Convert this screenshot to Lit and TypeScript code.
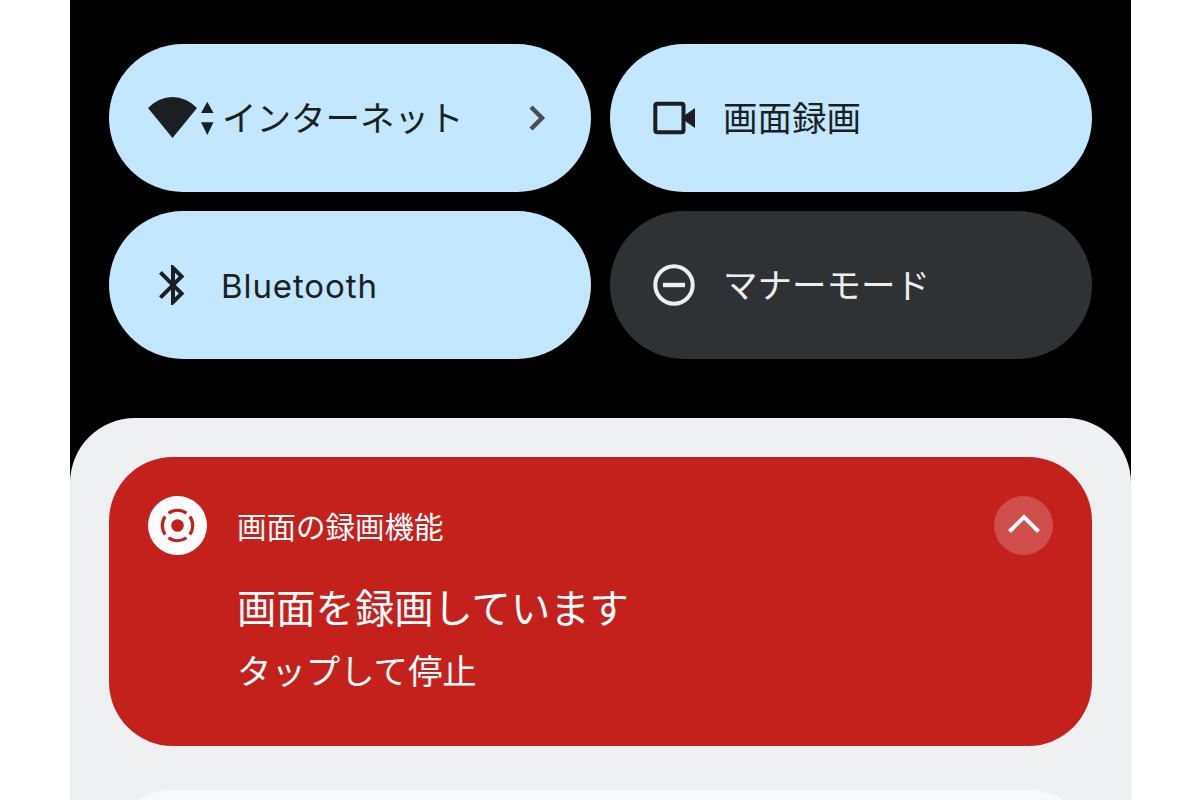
import { LitElement, html, css } from "lit";
import { customElement } from "lit/decorators.js";

@customElement("app-root")
export class AppRoot extends LitElement {
  static styles = css`
    :host { display: block; width: 1200px; height: 800px; background: #fff; overflow: hidden; }
    .phone {
      width: 1061px; height: 800px; margin-left: 70px; background: #000; overflow: hidden;
      font-family: "Noto Sans CJK JP", "Noto Sans", sans-serif;
    }
    .tiles {
      display: grid; grid-template-columns: 482px 482px; grid-auto-rows: 147.5px;
      column-gap: 19px; row-gap: 19.7px; padding: 44px 39px 0;
    }
    .tile {
      display: flex; align-items: center; border-radius: 74px; background: #c2e7ff;
      color: #1b1f22; font-size: 34.5px; padding-left: 40px;
    }
    .tile.off { background: #2f3235; color: #eceef0; }
    .tile svg { flex: none; display: block; }
    .tile .label { margin-left: 25px; line-height: 48px; white-space: nowrap; transform: translateY(-2px); }
    .tile.net { padding-left: 39px; }
    .tile.net .label { margin-left: 6px; }
    .tile.net .chev { margin-left: auto; margin-right: 45px; }
    .tile .latin { font-family: "Inter", sans-serif; font-size: 33px; letter-spacing: 0.9px; margin-left: 24px; transform: translateY(1px); }
    .panel {
      margin-top: 59px; height: 400px; background: #eff0f2; border-radius: 65px 65px 0 0;
      padding: 39px 39px 0; box-sizing: border-box;
    }
    .card {
      height: 289px; background: #c4211d; border-radius: 64px; color: #fff;
      padding: 39px 39px 0; box-sizing: border-box;
    }
    .head { display: flex; align-items: center; gap: 30px; height: 59px; }
    .head svg { flex: none; display: block; }
    .app { font-size: 29.5px; line-height: 59px; white-space: nowrap; }
    .expand { margin-left: auto; }
    .body { margin: 21px 0 0 89px; }
    .title { font-size: 39.3px; line-height: 60px; white-space: nowrap; }
    .sub { font-size: 34.4px; line-height: 60px; margin-top: 3px; white-space: nowrap; }
    .next { margin-top: 44px; height: 200px; background: #f8f9fb; border-radius: 64px; }
  `;

  render() {
    return html`
      <div class="phone">
        <div class="tiles">
          <div class="tile net">
            <svg width="68" height="48" viewBox="0 0 68 48">
              <path d="M0 14 A33 33 0 0 1 49 14 L24.5 44 Z" fill="#1b1f22"/>
              <path d="M59.3 7.7 L65.5 19 L53 19 Z M53 28.3 L65.5 28.3 L59.3 41 Z" fill="#1b1f22"/>
            </svg>
            <span class="label">インターネット</span>
            <svg class="chev" width="18" height="28" viewBox="0 0 18 28">
              <path d="M3 3 L14 14 L3 25" fill="none" stroke="#494d50" stroke-width="4.4"/>
            </svg>
          </div>
          <div class="tile">
            <svg width="48" height="48" viewBox="0 0 48 48">
              <rect x="5.3" y="9.7" width="28.2" height="28.6" rx="2" fill="none" stroke="#1b1f22" stroke-width="4"/>
              <path d="M35 21 L45 14 L45 34 L35 27 Z" fill="#1b1f22"/>
            </svg>
            <span class="label">画面録画</span>
          </div>
          <div class="tile">
            <svg width="48" height="48" viewBox="0 0 24 24">
              <path fill="#1b1f22" d="M17.71 7.71L12 2h-1v7.59L6.41 5 5 6.41 10.59 12 5 17.59 6.41 19 11 14.41V22h1l5.71-5.71-4.3-4.29 4.3-4.29zM13 5.83l1.88 1.88L13 9.59V5.83zm1.88 10.46L13 18.17v-3.76l1.88 1.88z"/>
            </svg>
            <span class="label latin">Bluetooth</span>
          </div>
          <div class="tile off">
            <svg width="48" height="48" viewBox="0 0 48 48">
              <circle cx="24" cy="24" r="18.7" fill="none" stroke="#eceef0" stroke-width="4"/>
              <rect x="13" y="21.8" width="22" height="4.4" fill="#eceef0"/>
            </svg>
            <span class="label">マナーモード</span>
          </div>
        </div>
        <div class="panel">
          <div class="card">
            <div class="head">
              <svg width="59" height="59" viewBox="0 0 59 59">
                <circle cx="29.5" cy="29.5" r="29.5" fill="#fff"/>
                <circle cx="29.5" cy="29.5" r="6.3" fill="#c4211d"/>
                <g fill="none" stroke="#c4211d" stroke-width="3.2">
                  <path d="M20.5 17.2 A15.3 15.3 0 0 1 38.5 17.2"/>
                  <path d="M41.8 20.5 A15.3 15.3 0 0 1 41.8 38.5"/>
                  <path d="M38.5 41.8 A15.3 15.3 0 0 1 20.5 41.8"/>
                  <path d="M17.2 38.5 A15.3 15.3 0 0 1 17.2 20.5"/>
                </g>
              </svg>
              <span class="app">画面の録画機能</span>
              <svg class="expand" width="59" height="59" viewBox="0 0 59 59">
                <circle cx="29.5" cy="29.5" r="29.5" fill="#fff" fill-opacity="0.2"/>
                <path d="M15.5 35.5 L30 21 L44.5 35.5" fill="none" stroke="#fff" stroke-width="4"/>
              </svg>
            </div>
            <div class="body">
              <div class="title">画面を録画しています</div>
              <div class="sub">タップして停止</div>
            </div>
          </div>
          <div class="next"></div>
        </div>
      </div>
    `;
  }
}
